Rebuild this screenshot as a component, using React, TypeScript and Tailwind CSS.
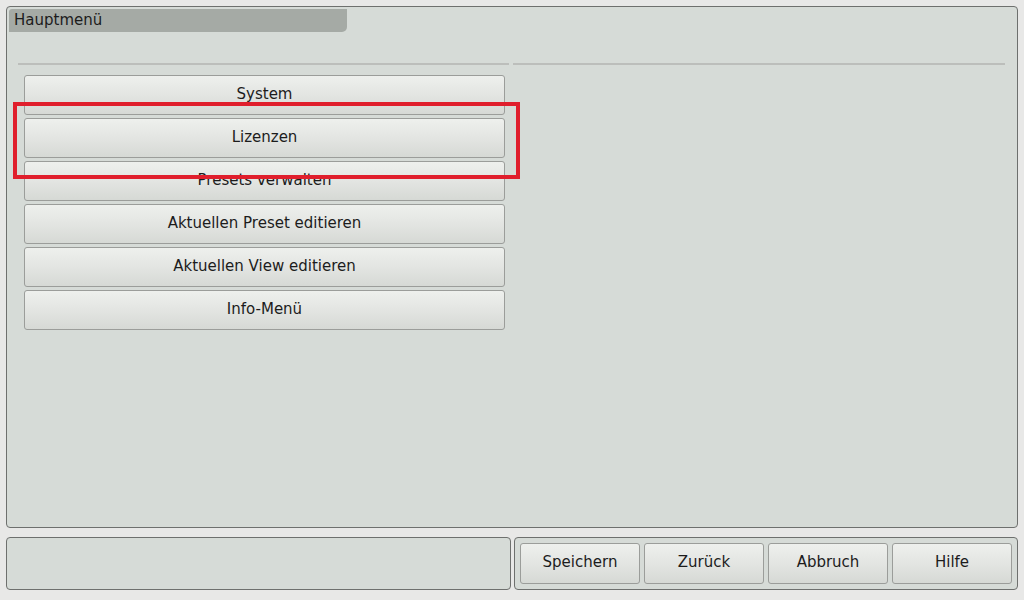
const menuItems = [
  "System",
  "Lizenzen",
  "Presets verwalten",
  "Aktuellen Preset editieren",
  "Aktuellen View editieren",
  "Info-Menü",
];

const footerButtons = ["Speichern", "Zurück", "Abbruch", "Hilfe"];

function PanelButton({ label, className = "" }: { label: string; className?: string }) {
  return (
    <button
      className={`flex items-center justify-center rounded-[3px] border border-[#9b9d9a] bg-gradient-to-b from-[#eef0ed] via-[#e3e5e2] to-[#d6d9d5] pb-[2px] text-[15px] text-[#1c1c1c] ${className}`}
    >
      {label}
    </button>
  );
}

export default function App() {
  return (
    <div
      className="relative flex h-[600px] w-[1024px] flex-col bg-[#e8e8e7] p-[6px]"
      style={{ fontFamily: '"DejaVu Sans", Verdana, sans-serif' }}
    >
      {/* Main panel */}
      <div className="flex h-[522px] flex-col rounded-[4px] border border-[#6e706e] bg-[#d6dbd7] p-[2px]">
        <div className="flex h-[23px] w-[338px] items-center rounded-br-[5px] rounded-tl-[3px] bg-[#a5aaa5] pl-[5px] text-[15px] text-[#1c1c1c]">
          Hauptmenü
        </div>

        <div className="mt-[31px] grid grid-cols-[491px_492px] gap-x-[4px] pl-[9px]">
          <div className="h-[2px] bg-[#bcbebb]" />
          <div className="h-[2px] bg-[#bcbebb]" />
        </div>

        <div className="ml-[15px] mt-[10px] flex w-[481px] flex-col gap-[3px]">
          {menuItems.map((item) => (
            <PanelButton key={item} label={item} className="h-[40px] w-full" />
          ))}
        </div>
      </div>

      {/* Footer */}
      <div className="mt-[9px] flex h-[53px] gap-[3px]">
        <div className="w-[505px] rounded-[4px] border border-[#6e706e] bg-[#d6dbd7]" />
        <div className="flex flex-1 gap-[4px] rounded-[4px] border border-[#6e706e] bg-[#d6dbd7] px-[5px] py-[5px]">
          {footerButtons.map((b) => (
            <PanelButton key={b} label={b} className="h-full flex-1" />
          ))}
        </div>
      </div>

      {/* Highlight annotation */}
      <div className="pointer-events-none absolute left-[13px] top-[102px] h-[77px] w-[507px] border-[4px] border-[#e01e2c]" />
    </div>
  );
}
